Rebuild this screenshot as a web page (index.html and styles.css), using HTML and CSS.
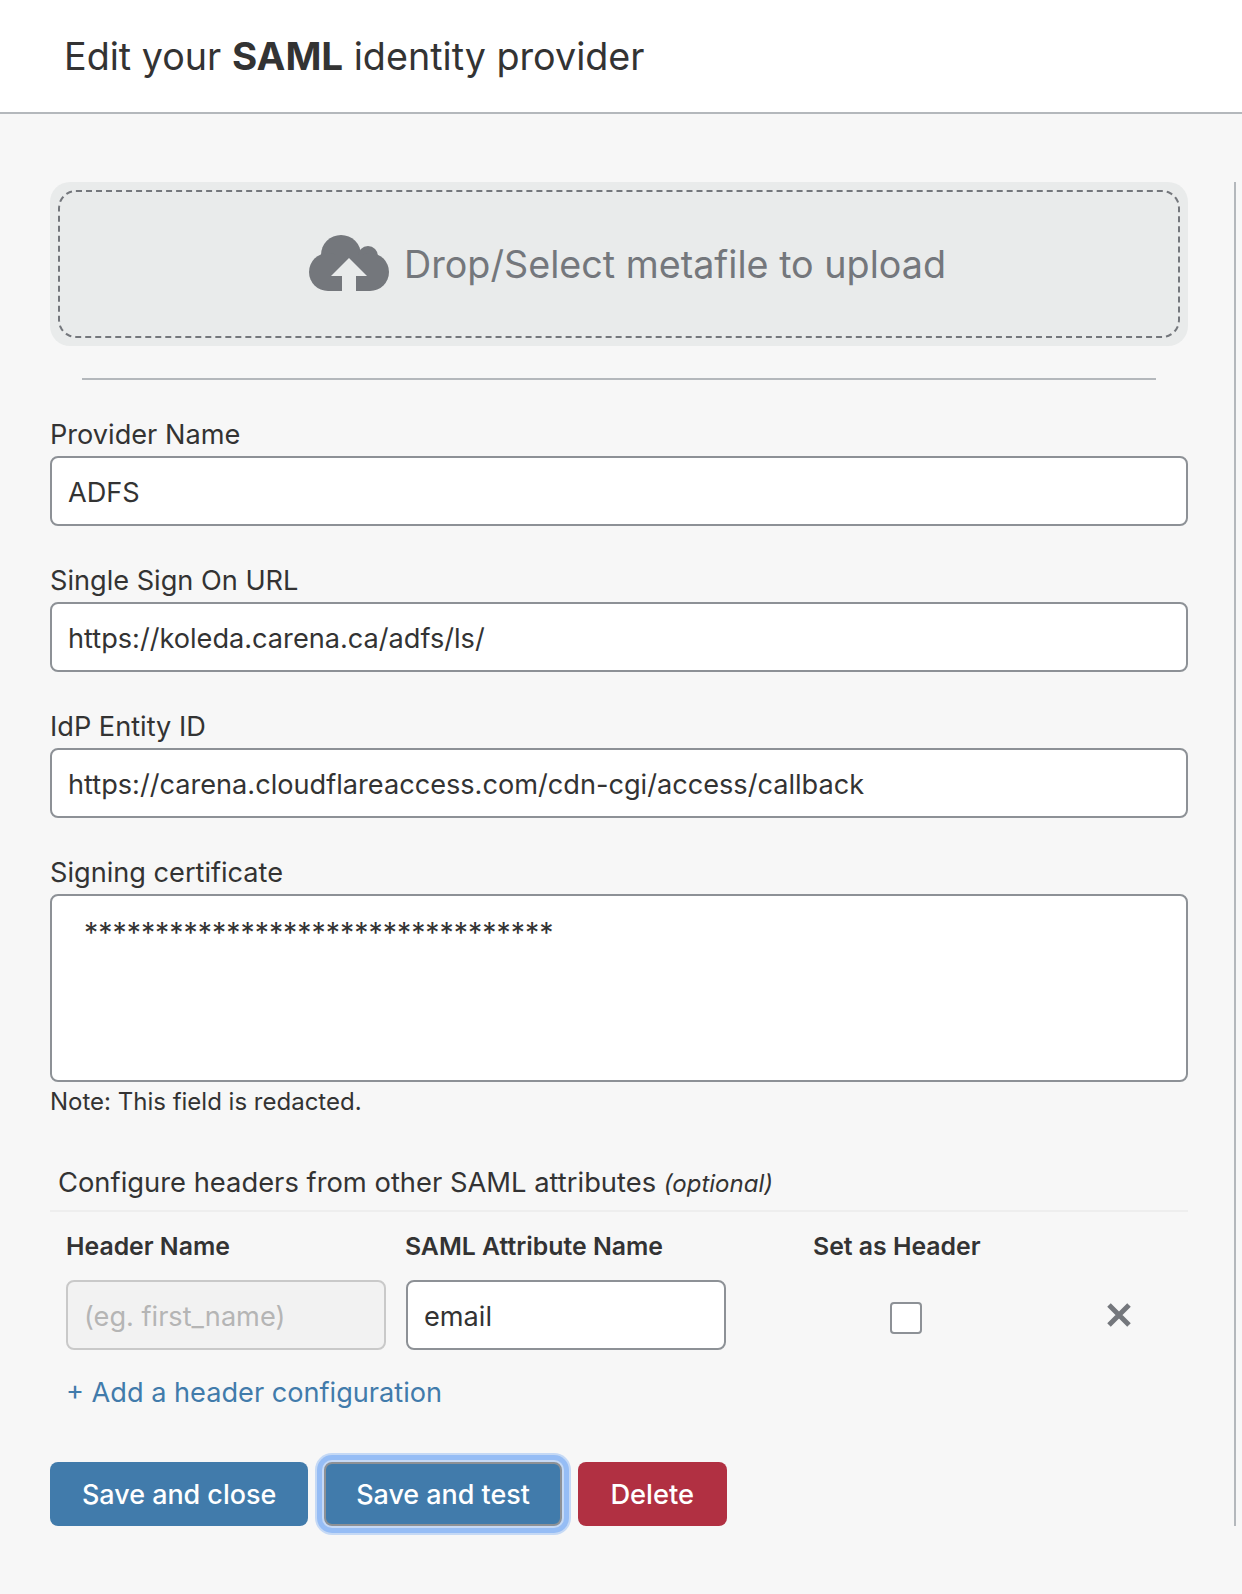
FILE: index.html
```html
<!DOCTYPE html>
<html lang="en">
  <head>
    <meta charset="utf-8" />
    <title>Edit your SAML identity provider</title>
    <link rel="stylesheet" href="styles.css">
  </head>
  <body>
    <header class="page-header">
      <h1 class="page-title">Edit your <strong>SAML</strong> identity provider</h1>
    </header>
    <main class="content">
      <form class="panel">
        <div class="dropzone">
          <div class="dropzone-inner">
            <svg class="cloud-icon" width="80" height="56" viewBox="0 0 80 56">
              <circle cx="32" cy="20" r="20" fill="#74777c" />
              <circle cx="59" cy="21" r="10" fill="#74777c" />
              <circle cx="19" cy="37" r="19" fill="#74777c" />
              <circle cx="61" cy="37" r="19" fill="#74777c" />
              <rect x="19" y="20" width="42" height="36" fill="#74777c" />
              <path d="M40 23 L58 41 H47 V56 H33 V41 H22 Z" fill="#e9ebeb" />
            </svg>
            <span class="dropzone-text">Drop/Select metafile to upload</span>
          </div>
        </div>
        <hr class="divider" />

        <div class="field">
          <label class="field-label">Provider Name</label>
          <input class="text-input" type="text" value="ADFS" />
        </div>
        <div class="field">
          <label class="field-label">Single Sign On URL</label>
          <input class="text-input" type="text" value="https://koleda.carena.ca/adfs/ls/" />
        </div>
        <div class="field">
          <label class="field-label">IdP Entity ID</label>
          <input class="text-input" type="text" value="https://carena.cloudflareaccess.com/cdn-cgi/access/callback" />
        </div>
        <div class="field">
          <label class="field-label">Signing certificate</label>
          <textarea class="text-area">*********************************</textarea>
          <p class="field-note">Note: This field is redacted.</p>
        </div>

        <div class="headers-title">Configure headers from other SAML attributes <em class="optional">(optional)</em></div>
        <div class="headers-grid">
          <div class="col-title">Header Name</div>
          <div class="col-title col-title-saml">SAML Attribute Name</div>
          <div class="col-title col-title-check">Set as Header</div>
          <div></div>
          <input class="text-input" type="text" placeholder="(eg. first_name)" disabled />
          <input class="text-input" type="text" value="email" />
          <div class="check-cell"><input class="check-box" type="checkbox" /></div>
          <div class="remove-cell">
            <svg width="24" height="24" viewBox="0 0 24 24">
              <path d="M2 2 L22 22 M22 2 L2 22" stroke="#74777c" stroke-width="5" fill="none" />
            </svg>
          </div>
        </div>
        <a class="add-link" href="#">+ Add a header configuration</a>

        <div class="actions">
          <button class="btn btn-primary" type="button">Save and close</button>
          <button class="btn btn-primary btn-focus" type="button">Save and test</button>
          <button class="btn btn-danger" type="button">Delete</button>
        </div>
      </form>
    </main>
  </body>
</html>
```

FILE: styles.css
```css
* {
  box-sizing: border-box;
}

html,
body {
  margin: 0;
  height: 100%;
}

body {
  background-color: #f7f7f7;
  color: #333;
  font-family: Inter, "Liberation Sans", sans-serif;
}

.page-header {
  background-color: #fff;
  height: 114px;
  padding: 32px 0 0 64px;
  border-bottom: 2px solid #b4b8bc;
}

.page-title {
  margin: 0;
  font-size: 37.7px;
  line-height: 48px;
  font-weight: 400;
}

.page-title strong {
  font-size: 38.6px;
  font-weight: 700;
}

.content {
  padding-top: 68px;
}

.panel {
  width: 1236px;
  height: 1344px;
  padding: 0 46px 0 50px;
  border-right: 2px solid #b4b8bc;
}

.dropzone {
  background-color: #e9ebeb;
  border-radius: 20px;
  padding: 8px;
}

.dropzone-inner {
  height: 148px;
  padding-left: 17px;
  border: 2px dashed #74777c;
  border-radius: 18px;
  display: flex;
  justify-content: center;
  align-items: center;
  gap: 15px;
}

.cloud-icon {
  margin-bottom: 2px;
}

.dropzone-text {
  font-size: 37.7px;
  color: #74777c;
}

.divider {
  margin: 32px 32px 35px;
  border: 0;
  border-top: 2px solid #b4b8bc;
}

.field {
  margin-bottom: 35px;
}

.field-label {
  display: block;
  font-size: 27.15px;
  line-height: 40px;
  margin-bottom: 1px;
}

.text-input,
.text-area {
  display: block;
  width: 100%;
  border: 2px solid #8d9196;
  border-radius: 8px;
  background-color: #fff;
  color: #333;
  font-family: inherit;
  font-size: 27.15px;
}

.text-input {
  height: 70px;
  padding: 2px 16px 0;
}

.text-input:disabled {
  background-color: #f2f2f2;
  border-color: #c9c9c9;
}

.text-input::placeholder {
  color: #b5b5b5;
  opacity: 1;
}

.text-area {
  height: 188px;
  padding: 21px 32px;
  resize: none;
  font-size: 28.4px;
  line-height: 32px;
}

.field-note {
  margin: 3px 0 0;
  font-size: 24px;
  line-height: 34px;
}

.headers-title {
  margin-top: 44px;
  padding: 0 0 6px 8px;
  font-size: 27.35px;
  line-height: 40px;
  border-bottom: 2px solid #eee;
}

.optional {
  font-size: 24px;
}

.headers-grid {
  display: grid;
  grid-template-columns: 320px 320px 1fr 65px;
  column-gap: 20px;
  padding: 16px 16px 0;
}

.col-title {
  font-size: 24.8px;
  line-height: 36px;
  font-weight: 600;
  margin-bottom: 16px;
}

.col-title-saml {
  margin-left: -1px;
}

.col-title-check {
  padding-left: 67px;
}

.check-cell,
.remove-cell {
  display: flex;
  align-items: center;
}

.check-cell {
  padding-left: 144px;
}

.check-box {
  appearance: none;
  width: 32px;
  height: 32px;
  margin: 6px 0 0;
  background-color: #fff;
  border: 2px solid #8d9196;
  border-radius: 4px;
}

.add-link {
  display: block;
  margin: 22px 0 0 16px;
  font-size: 27.15px;
  line-height: 42px;
  color: #417bab;
  text-decoration: none;
}

.actions {
  display: flex;
  gap: 16px;
  margin-top: 48px;
}

.btn {
  height: 64px;
  padding: 0 32px;
  border: 0;
  border-radius: 8px;
  color: #fff;
  font-family: inherit;
  font-size: 26.9px;
  font-weight: 500;
}

.btn-primary {
  background-color: #417bab;
}

.btn-danger {
  padding: 0 32.5px;
  background-color: #b13042;
  font-size: 27.3px;
}

.btn-focus {
  padding: 0 30px;
  border: 2px solid #8d9196;
  box-shadow: 0 0 0 2px #c5d9f5, 0 0 0 7px #96bdf5, 0 0 0 9px #c5d9f5;
}
```
